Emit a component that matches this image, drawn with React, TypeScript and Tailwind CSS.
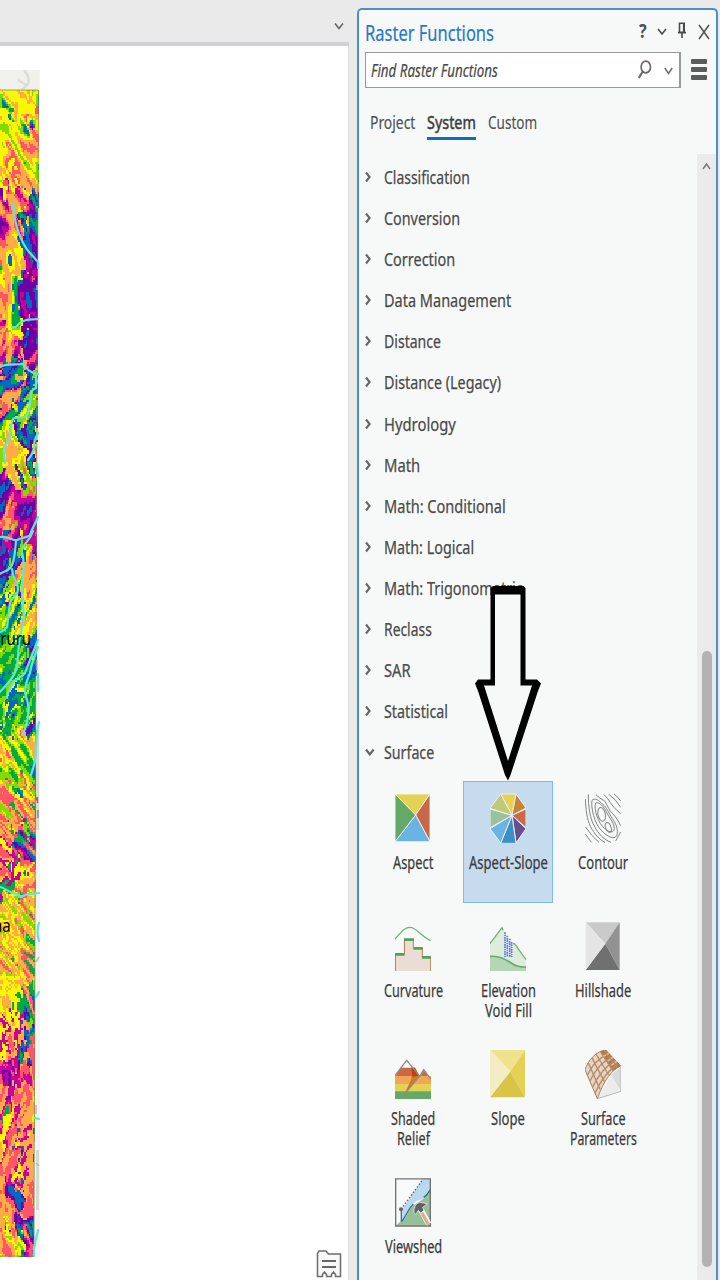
import { useLayoutEffect, useRef, useState, type ReactNode } from "react";

/** Condensed label: text is squeezed horizontally to the given width. */
function Fit({ w, children, className = "" }: { w: number; children: string; className?: string }) {
  const ref = useRef<HTMLSpanElement>(null);
  const [scale, setScale] = useState(0.75);
  useLayoutEffect(() => {
    if (ref.current) setScale(w / ref.current.offsetWidth);
  }, [w]);
  return (
    <span className={`block shrink-0 ${className}`} style={{ width: w }}>
      <span ref={ref} className="inline-block origin-left whitespace-nowrap" style={{ transform: `scaleX(${scale})` }}>
        {children}
      </span>
    </span>
  );
}

/* ---------- aspect raster ---------- */

const COLORS: Record<string, string> = {
  Y: "#f8f800",
  L: "#84d900",
  G: "#00ab44",
  B: "#0068c0",
  P: "#6c00a3",
  M: "#ca009c",
  C: "#ff5568",
  O: "#ffab47",
};

// [end y, left palette, right palette, streak slope]
const BANDS: [number, string, string, number][] = [
  [30, "BGLYOYY", "PBGLYOY", 0.2],
  [102, "GLLYYOCY", "BGLYYOOC", 0.5],
  [176, "BYOOCMP", "PGBPMCP", 0.3],
  [240, "GLYYOOC", "GBBPPMP", 0.1],
  [278, "YOOCMP", "YBPPPMC", -0.4],
  [328, "OCPBBGG", "BGPBBLY", -0.6],
  [392, "BPYLYOO", "GBPYOLC", 0.3],
  [450, "BPPMCO", "BPPMMCL", -0.3],
  [500, "GBBPBL", "GLYOOCB", -0.4],
  [560, "PBGLYBG", "BLYOYC", -0.5],
  [640, "BGGLYBG", "PBGLGY", -0.5],
  [690, "GLYOYC", "BGGLYO", 0.6],
  [740, "YLOCCO", "YOCOGL", 0.9],
  [775, "CCOMYG", "MPBGCO", 0.8],
  [800, "CCOYMG", "MCCOYC", -0.5],
  [890, "OYOYLOC", "LYOOCGL", 0.8],
  [930, "OOYYO", "OCBGGGL", 0.4],
  [965, "COMYM", "BPBGCMC", 0.3],
  [1000, "MMPMCY", "CCOOCM", 0.2],
  [1032, "COMCG", "CCOOY", -0.3],
  [1090, "OCMYOY", "PBOOMC", -0.4],
  [1130, "BPCOOC", "COPBCM", 0.2],
  [1170, "YLYOOC", "GBPMCOL", 0.3],
];

function hash(x: number, y: number) {
  let h = Math.imul(x, 374761393) + Math.imul(y, 668265263);
  h = Math.imul(h ^ (h >>> 13), 1274126177);
  return ((h ^ (h >>> 16)) >>> 0) / 4294967295;
}

function noise(x: number, y: number) {
  const xi = Math.floor(x);
  const yi = Math.floor(y);
  const fx = x - xi;
  const fy = y - yi;
  const sx = fx * fx * (3 - 2 * fx);
  const sy = fy * fy * (3 - 2 * fy);
  const a = hash(xi, yi) * (1 - sx) + hash(xi + 1, yi) * sx;
  const b = hash(xi, yi + 1) * (1 - sx) + hash(xi + 1, yi + 1) * sx;
  return a * (1 - sy) + b * sy;
}

function rasterPaths() {
  const out: Record<string, string> = {};
  const cw = 1.5;
  const ch = 2;
  for (let y = 0; y < 1168; y += ch) {
    const edge = 39 - (y / 1168) * 5;
    for (let x = 0; x < edge; x += cw) {
      const yy = y + (noise(x / 4, y / 9 + 300) - 0.5) * 36;
      const bandIndex = BANDS.findIndex((b) => yy < b[0]);
      const band = BANDS[bandIndex < 0 ? BANDS.length - 1 : bandIndex];
      const mid = 19 + (noise(y / 15, 40) - 0.5) * 16 + (noise(x / 3, y / 7 + 500) - 0.5) * 14;
      const pal = x < mid ? band[1] : band[2];
      const u = x - y * band[3];
      const n = noise(u / 6, y / 19 + 70) * 0.75 + noise(u / 2.8 + 9, y / 9) * 0.25;
      const v = Math.min(0.999, Math.max(0, (n - 0.16) / 0.68));
      const c = pal[Math.floor(v * pal.length)];
      const w = Math.min(cw, edge - x);
      out[c] = (out[c] ?? "") + `M${x} ${y}h${w}v${ch}h-${w}z`;
    }
  }
  return out;
}

const PATHS = rasterPaths();

const RIVERS = [
  "M13 113C14 125 15 131 17 137C19 147 26 159 30 163L38 172V178",
  "M12 237C17 240 18 232 22 232C27 228 32 230 38 229",
  "M0 277C6 273 16 275 23 274C27 279 30 283 38 284",
  "M36 285V298Q31 300 31 304C30 317 29 325 25 327C18 328 14 327 13 329C10 336 11 346 9 350C7 354 2 357 4 363L5 373",
  "M38 343Q34 350 34 356T28 370M37 374L38 386",
  "M0 447C10 446 11 451 17 450C23 447 27 448 30 445C32 438 34 437 38 427",
  "M16 450C15 463 15 468 12 475C9 482 3 481 0 484",
  "M33 441C30 452 22 453 22 462C24 470 24 476 23 484C21 500 23 515 24 527C22 540 19 547 19 554C18 562 18 575 16 580C12 591 5 596 0 602",
  "M12 479C13 490 18 492 18 499C18 507 11 507 10 513C9 520 8 530 7 537C4 541 3 541 0 542",
  "M38 550C34 560 28 575 25 583C20 589 15 588 13 593C9 600 7 603 7 608",
  "M38 557C34 567 31 577 30 583C26 592 25 597 25 603C29 615 29 620 28 627C27 635 24 640 23 645",
  "M38 584V601M39 632C36 642 37 652 36 657C36 670 34 676 31 685",
  "M0 797C5 798 9 802 13 803C18 804 20 807 23 806C28 803 33 804 39 803",
  "M39 833Q36 842 39 851M36 907L39 902M35 1028L39 1029M38 1140C37 1147 35 1149 35 1155Q33 1160 34 1166",
];

function MapView() {
  return (
    <div className="relative mt-[24px] h-[1187px] w-[40px] overflow-hidden bg-[#f3f4ee]">
      <svg className="block" width="40" height="1187" viewBox="0 -20 40 1187">
        <path d="M0 -20H39V0H0z" fill="#f0f0ed" />
        <path d="M24 -20Q30 -14 28 -6L22 0M18 -10L28 -4" stroke="#dddcd5" strokeWidth="2.5" fill="none" />
        <g shapeRendering="crispEdges">
          {Object.entries(PATHS).map(([k, d]) => (
            <path key={k} d={d} fill={COLORS[k]} />
          ))}
        </g>
        <path d="M0 0H38M38.5 0L36 500L34 1166H0" fill="none" stroke="#778068" strokeWidth=".7" />
        <path d="M37.5 640V740M37.5 1060V1120" stroke="#d5dccd" strokeWidth="3" />
        <path d="M35 705L38 713M37.5 707V713M35.5 720V729M38 720V728" stroke="#737668" strokeWidth="1.2" />
        <path d="M37 195V200M37 570V580M36 872L39 867M36 1015V1024M36 1073L39 1076" stroke="#bdb5ca" strokeWidth="1.5" />
        <g fill="none" stroke="#62e4d6" strokeWidth="2.2" strokeLinecap="round" strokeLinejoin="round">
          {RIVERS.map((d) => (
            <path key={d} d={d} />
          ))}
        </g>
      </svg>
      <span className="absolute top-[557px] left-[-9px] origin-left scale-x-[0.83] text-[18px] leading-[22px] text-black">ururu</span>
      <span className="absolute top-[844px] left-[-7px] origin-left scale-x-[0.83] text-[18px] leading-[22px] text-black">na</span>
    </div>
  );
}

/* ---------- tool icons ---------- */

const AspectIcon = (
  <g stroke="#f7f9f9" strokeWidth="2.5">
    <path d="M0 3H105L62 66z" fill="#e5d153" />
    <path d="M105 3V146L62 66z" fill="#c96749" />
    <path d="M0 146H105L62 66z" fill="#6bb3e2" />
    <path d="M0 3V146L62 66z" fill="#64a967" />
  </g>
);

const AspectSlopeIcon = (
  <g stroke="#e9f0f5" strokeWidth="3">
    <path d="M32 3H78L66 67z" fill="#e5d153" />
    <path d="M78 3L108 45L66 67z" fill="#c58335" />
    <path d="M108 48V104L66 67z" fill="#cc6946" />
    <path d="M108 107L78 150L66 67z" fill="#65508d" />
    <path d="M78 151H32L66 67z" fill="#3b8fc5" />
    <path d="M32 150L0 107L66 67z" fill="#6bb3e2" />
    <path d="M0 104V48L66 67z" fill="#9bc19a" />
    <path d="M0 46L32 3L66 67z" fill="#c0c978" />
  </g>
);

const ContourIcon = (
  <g fill="none" stroke="#828282" strokeWidth="3">
    <path d="M21 22C29 14 41 20 54 35C65 43 70 57 82 77C94 93 101 113 95 128C87 142 66 130 50 113C28 93 17 42 21 22z" />
    <path d="M32 30C43 25 58 43 64 56C72 75 87 87 88 107C86 124 69 116 58 106C40 91 25 49 32 30z" />
    <ellipse cx="50" cy="64" rx="11" ry="21" transform="rotate(-12 50 64)" />
    <ellipse cx="70" cy="103" rx="8" ry="15" transform="rotate(-22 70 103)" />
    <path d="M10 4C10 40 15 79 28 99C40 124 59 141 78 148M1 18C3 51 5 78 17 101C27 122 44 141 60 148M2 102Q17 127 42 148M1 123L19 148M33 5Q43 16 59 24C69 39 72 54 87 66Q99 80 107 98M56 4Q69 15 75 28Q84 43 107 62M71 4Q91 16 107 43M87 3Q100 12 107 24M107 117L92 144" />
  </g>
);

const CurvatureIcon = (
  <g fill="none">
    <path d="M1 150V98H28V54H55V80H82V109H107V150z" fill="#eaddd4" />
    <path d="M1.5 150V98M28.5 98V54M55 54V80M82 80V109M107 109V150" stroke="#b9824d" strokeWidth="3" />
    <path d="M0 100H29M27 56H57M55 82H83M81 109H108" stroke="#5b9c58" strokeWidth="8" />
    <path d="M0 54C17 37 26 19 45 19C65 19 76 45 107 59" stroke="#70b776" strokeWidth="4" />
  </g>
);

const ElevationIcon = (
  <g fill="none">
    <path d="M0 68L36 20L42 31V106H69V67L108 116V150H0z" fill="#dcedda" />
    <path d="M0 106C33 103 53 120 68 129Q84 139 108 138V150H0z" fill="#b4d6b5" />
    <path d="M0 106C33 103 53 120 68 129Q84 139 108 138" stroke="#68a873" strokeWidth="5" />
    <path d="M0 68L36 20L39 28M69 67L75 70L108 116" stroke="#70b776" strokeWidth="4" />
    <path d="M45 34V108M52 44V108M59 53V108M65 63V108" stroke="#5476ca" strokeWidth="5" strokeDasharray="5 2" />
  </g>
);

const HillshadeIcon = (
  <g>
    <path d="M2 4H104L61 68z" fill="#cacaca" />
    <path d="M104 4V147L61 68z" fill="#929292" />
    <path d="M2 147H104L61 68z" fill="#707070" />
    <path d="M2 4V147L61 68z" fill="#e5e5e5" />
  </g>
);

const ShadedIcon = (
  <g>
    <path d="M0 83L17 56H57L76 83L87 62L108 91V105H0z" fill="#ce6843" />
    <path d="M0 81H108V106H0z" fill="#f0a558" />
    <path d="M0 105H108V128H0z" fill="#e5d153" />
    <path d="M0 127H108V150H0z" fill="#64a967" />
    <path d="M49 56L60 56L74 81L27 139L49 90z" fill="#d17a24" />
    <path d="M49 56H60L71 80L52 83z" fill="#bf3f13" />
    <path d="M0 80L35 34L74 82L86 62L108 91M86 66L25 140" fill="none" stroke="#8f8d87" strokeWidth="4" />
  </g>
);

const SlopeIcon = (
  <g>
    <path d="M0 3H105L61 67z" fill="#efe28d" />
    <path d="M105 3V145L61 67z" fill="#e5d153" />
    <path d="M0 145H105L61 67z" fill="#d8c447" />
    <path d="M0 3V145L61 67z" fill="#f3edc4" />
  </g>
);

const SurfaceIcon = (
  <g fill="none">
    <path d="M37 149L79 77L108 54V127z" fill="#ececec" />
    <path d="M79 77L108 54V127z" fill="#dadada" />
    <path d="M37 149L108 127V54" stroke="#b8b8b8" strokeWidth="3" />
    <path d="M0 62C9 34 35 4 63 4L107 51C80 63 57 93 37 149z" fill="#e6d4c6" stroke="#b07e50" strokeWidth="3" />
    <path d="M45 9C55 4 61 3 65 5L107 51Q95 56 84 66z" fill="#b27a41" />
    <path d="M7 79Q27 33 72 14M15 96Q37 47 81 23M22 116Q47 61 91 34M30 133Q55 75 100 43" stroke="#b68b65" strokeWidth="4" />
    <path d="M10 42L45 121M21 27L58 97M33 15L71 78M46 7L84 66M57 5L97 57" stroke="#b68b65" strokeWidth="4" />
    <path d="M55 22L63 18M68 36L76 31M79 49L87 43M66 15L72 13M78 29L84 25M89 41L96 37" stroke="#d9bc9f" strokeWidth="5" />
  </g>
);

const ViewshedIcon = (
  <g fill="none">
    <path d="M2 6H106V147H2z" fill="#f8f9fa" />
    <path d="M22 96L83 6H106V45C91 75 72 61 58 78C43 88 35 113 20 132z" fill="#bad9ef" />
    <path d="M2 146Q15 132 27 128C39 112 44 93 57 83C79 70 96 60 106 41V146z" fill="#97c09a" />
    <path d="M20 133C34 118 39 96 55 82M86 61Q98 53 106 38" stroke="#24718f" strokeWidth="4" />
    <path d="M19 96L81 11" stroke="#555" strokeWidth="4" strokeDasharray="4 6" />
    <path d="M19 96V134" stroke="#666" strokeWidth="4" />
    <circle cx="18" cy="97" r="6" fill="#666" />
    <path d="M2 5.5H106V147H2z" stroke="#727272" strokeWidth="4" />
    <path d="M74 92L101 141" stroke="#f7f9f9" strokeWidth="17" />
    <path d="M57 106Q56 83 73 76L97 80L83 91L87 100L76 108L70 100L62 112z" fill="#606060" stroke="#f7f9f9" strokeWidth="2" />
    <path d="M80 107L101 144" stroke="#dcb08c" strokeWidth="10" />
  </g>
);

type Tool = { lines: [string, number][]; icon: ReactNode; selected?: boolean };

const TOOLS: Tool[] = [
  { lines: [["Aspect", 40]], icon: AspectIcon },
  { lines: [["Aspect-Slope", 79]], icon: AspectSlopeIcon, selected: true },
  { lines: [["Contour", 50]], icon: ContourIcon },
  { lines: [["Curvature", 59]], icon: CurvatureIcon },
  { lines: [["Elevation", 55], ["Void Fill", 47]], icon: ElevationIcon },
  { lines: [["Hillshade", 56]], icon: HillshadeIcon },
  { lines: [["Shaded", 44], ["Relief", 33]], icon: ShadedIcon },
  { lines: [["Slope", 34]], icon: SlopeIcon },
  { lines: [["Surface", 45], ["Parameters", 67]], icon: SurfaceIcon },
  { lines: [["Viewshed", 57]], icon: ViewshedIcon },
];

const CATEGORIES: [string, number][] = [
  ["Classification", 86],
  ["Conversion", 76],
  ["Correction", 71],
  ["Data Management", 127],
  ["Distance", 57],
  ["Distance (Legacy)", 117],
  ["Hydrology", 72],
  ["Math", 36],
  ["Math: Conditional", 122],
  ["Math: Logical", 90],
  ["Math: Trigonometric", 139],
  ["Reclass", 48],
  ["SAR", 27],
  ["Statistical", 64],
  ["Surface", 50],
];

function ToolCell({ tool }: { tool: Tool }) {
  return (
    <div
      className={`flex h-[122px] w-[90px] flex-col items-center border pt-[11px] ${
        tool.selected ? "border-[#7fbde7] bg-[#c6dbee]" : "border-transparent"
      }`}
    >
      <svg className="block shrink-0" width="36" height="50" viewBox="0 0 108 150">
        {tool.icon}
      </svg>
      <div className="mt-[9px] flex flex-col items-center text-[18px] leading-[20px] text-[#3b3b3b] [-webkit-text-stroke:0.25px_#3b3b3b]">
        {tool.lines.map(([text, w]) => (
          <Fit key={text} w={w}>
            {text}
          </Fit>
        ))}
      </div>
    </div>
  );
}

function Header() {
  return (
    <>
      <div className="mt-[9px] flex h-[26px] items-center pl-[6px]">
        <Fit w={129} className="text-[22px] leading-[26px] text-[#2878c6] [-webkit-text-stroke:0.2px_#2878c6]">
          Raster Functions
        </Fit>
        <Fit w={8} className="-mt-[2px] ml-[145px] text-[20px] leading-[24px] font-bold text-[#505050]">
          ?
        </Fit>
        <svg className="ml-[10px]" width="10" height="10" viewBox="0 0 10 10">
          <path d="M1 2L5 7L9 2" fill="none" stroke="#505050" strokeWidth="1.7" />
        </svg>
        <svg className="mb-[3px] ml-[10px]" width="10" height="17" viewBox="0 0 10 17">
          <path d="M2.5 1.2H7.2V10.4H2.5zM1 10.6H9M5 10.6V16M6.7 1V10.4" fill="none" stroke="#4a4a4a" strokeWidth="1.6" />
        </svg>
        <svg className="-mt-[1px] ml-[11px]" width="12" height="16" viewBox="0 0 12 16">
          <path d="M1 1L11 15M11 1L1 15" fill="none" stroke="#505050" strokeWidth="1.5" />
        </svg>
      </div>
      <div className="mt-[7px] flex items-center pl-[6px]">
        <div className="flex h-[36px] w-[316px] items-center border border-r-2 border-[#999] bg-white pl-[5px]">
          <Fit w={127} className="text-[17.5px] leading-[24px] text-[#494949] italic [-webkit-text-stroke:0.2px_#494949]">
            Find Raster Functions
          </Fit>
          <svg className="ml-[140px]" width="14" height="20" viewBox="0 0 14 20">
            <ellipse cx="7.8" cy="7" rx="4.7" ry="5.8" fill="none" stroke="#6b6b6b" strokeWidth="1.7" />
            <path d="M4.8 11.5L.8 18" stroke="#6b6b6b" strokeWidth="2.1" />
          </svg>
          <svg className="mt-[2px] ml-[12px]" width="9" height="10" viewBox="0 0 9 10">
            <path d="M.8 2L4.5 7.5L8.2 2" fill="none" stroke="#6b6b6b" strokeWidth="1.5" />
          </svg>
        </div>
        <div className="ml-[10px] flex flex-col gap-[3px] pb-[2px]">
          <div className="h-[5px] w-[16px] rounded-[1px] bg-[#5c5c5c]" />
          <div className="h-[5px] w-[16px] rounded-[1px] bg-[#5c5c5c]" />
          <div className="h-[5px] w-[16px] rounded-[1px] bg-[#5c5c5c]" />
        </div>
      </div>
      <div className="mt-[21px] flex h-[32px] gap-[12px] pl-[11px] text-[18.5px] leading-[26px] text-[#505050] [-webkit-text-stroke:0.15px_#505050]">
        <Fit w={45}>Project</Fit>
        <div className="h-[31px] border-b-[3px] border-[#0b6fbf] text-[#3d3d3d] [-webkit-text-stroke:0.5px_#3d3d3d]">
          <Fit w={49}>System</Fit>
        </div>
        <Fit w={49}>Custom</Fit>
      </div>
    </>
  );
}

export default function App() {
  return (
    <div className="relative flex h-[1280px] w-[720px] overflow-hidden bg-[#eaeaea] font-['Noto_Sans','Open_Sans',sans-serif]">
      <main className="flex h-full w-[349px] flex-col">
        <div className="flex h-[46px] items-center justify-end border-b-4 border-[#d1d1d5] pt-[9px] pr-[5px]">
          <svg width="10" height="10" viewBox="0 0 10 10">
            <path d="M1 2.5L5 7.5L9 2.5" fill="none" stroke="#666" strokeWidth="1.6" />
          </svg>
        </div>
        <div className="flex min-h-0 flex-1 items-start justify-between border-r border-[#dedede] bg-white">
          <MapView />
          <svg className="mt-[1202px] mr-[6px] shrink-0" width="26" height="30" viewBox="0 0 26 30">
            <path
              d="M1.5 28.5V5.5L3 3H10L12.5 6H24.5V28.5H19.5V26.5L17.5 24L15.5 26.5V28.5H10.5V26.5L8.5 24L6.5 26.5V28.5z"
              fill="#f8f8f8"
              stroke="#6e6e6e"
              strokeWidth="1.5"
            />
            <path d="M6 13H20M6 19H20" stroke="#666" strokeWidth="2" />
          </svg>
        </div>
      </main>

      <aside className="mt-[8px] ml-[8px] flex h-[1280px] w-[361px] flex-col rounded-t-[5px] border-2 border-b-0 border-[#4b8fcb] bg-[#f7f9f9]">
        <Header />
        <div className="mt-[13px] flex min-h-0 flex-1 justify-between">
          <div className="flex flex-col pt-[2.4px]">
            {CATEGORIES.map(([name, w], i) => (
              <div key={name} className="flex h-[41.1px] shrink-0 items-center pl-[6px] text-[#4a4a4a]">
                {i === CATEGORIES.length - 1 ? (
                  <svg className="mr-[8px] mb-[1px]" width="11" height="12" viewBox="0 0 11 12">
                    <path d="M1 3.5L4.8 8.5L8.6 3.5" fill="none" stroke="#666" strokeWidth="2.2" />
                  </svg>
                ) : (
                  <svg className="mr-[8px]" width="11" height="12" viewBox="0 0 11 12">
                    <path d="M1 1.5L4.6 6L1 10.5" fill="none" stroke="#666" strokeWidth="2.1" />
                  </svg>
                )}
                <Fit w={w} className="text-[18.5px] leading-[26px] [-webkit-text-stroke:0.25px_#4a4a4a]">
                  {name}
                </Fit>
              </div>
            ))}
            <div className="mt-[8.1px] grid grid-cols-[90px_90px_90px] gap-x-[5px] gap-y-[6px] pl-[9px]">
              {TOOLS.map((t) => (
                <ToolCell key={t.lines[0][0]} tool={t} />
              ))}
            </div>
          </div>
          <div className="flex w-[19px] flex-col items-center bg-[#ebebeb] pt-[8px]">
            <svg width="9" height="9" viewBox="0 0 9 9">
              <path d="M1 7L4.5 2L8 7" fill="none" stroke="#777" strokeWidth="1.4" />
            </svg>
            <div className="mt-[480px] h-[616px] w-[10px] rounded-full bg-[#b3b3b3]" />
          </div>
        </div>
      </aside>

      <svg className="absolute top-[580px] left-[470px]" width="76" height="206" viewBox="470 580 76 206">
        <path d="M492 587H524V682H539L508 777L478 682H492z" fill="#f7f9f9" />
        <path
          fillRule="evenodd"
          fill="#000"
          d="M490.5 588L493 586H523.5L525.5 588V679.5H537L541 683.5L538 691L510.5 775L508 780.5L505 775L478 691L475 683.5L478 679.5H490.5zM495 594.5V685.5H484L508 761L532 685.5H520.5V594.5z"
        />
      </svg>
    </div>
  );
}
